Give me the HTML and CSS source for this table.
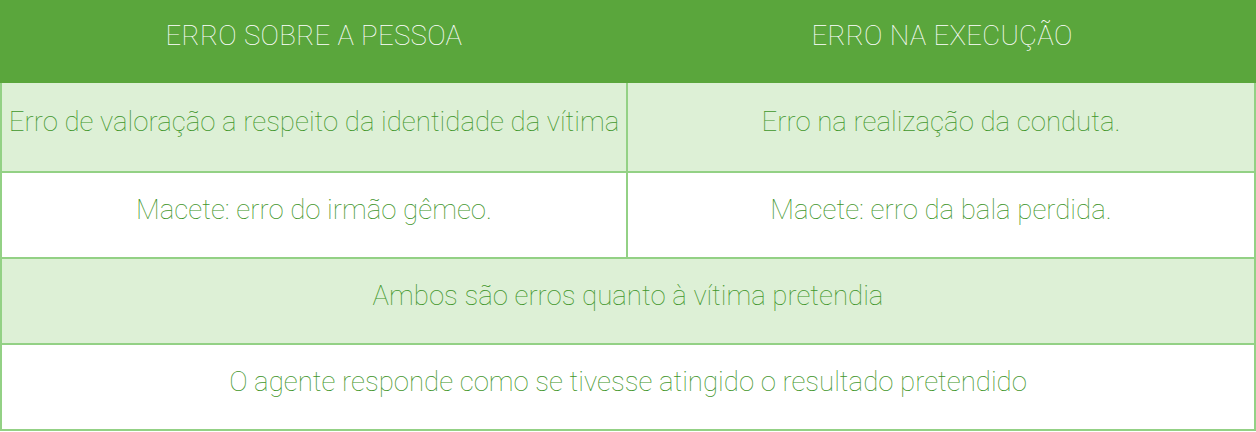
FILE: index.html
```html
<!DOCTYPE html>
<html lang="pt">
<head>
<meta charset="utf-8">
<title>Erro sobre a pessoa x Erro na execução</title>
<link rel="stylesheet" href="styles.css">
</head>
<body>
<div class="table">
  <div class="cell head">ERRO SOBRE A PESSOA</div>
  <div class="cell head">ERRO NA EXECUÇÃO</div>

  <div class="cell tint tall left">Erro de valoração a respeito da identidade da vítima</div>
  <div class="cell tint tall">Erro na realização da conduta.</div>

  <div class="cell left">Macete: erro do irmão gêmeo.</div>
  <div class="cell">Macete: erro da bala perdida.</div>

  <div class="cell tint span">Ambos são erros quanto à vítima pretendia</div>

  <div class="cell span">O agente responde como se tivesse atingido o resultado pretendido</div>
</div>
</body>
</html>
```

FILE: styles.css
```css
html, body {
  margin: 0;
  padding: 0;
  background: #ffffff;
}

.table {
  width: 1256px;
  display: grid;
  grid-template-columns: 628px 628px;
  font-family: "Roboto", "Liberation Sans", sans-serif;
  font-weight: 100;
  font-size: 27.6px;
  line-height: 1.2;
  color: #3f962a;
}

.cell {
  box-sizing: border-box;
  height: 86px;
  display: flex;
  align-items: center;
  justify-content: center;
  text-align: center;
  padding-bottom: 11px;
  border-bottom: 2px solid #93d185;
  border-right: 2px solid #93d185;
  white-space: nowrap;
}

.left {
  border-left: 2px solid #93d185;
}

.head {
  height: 83px;
  background: #5aa63c;
  color: #ffffff;
  border: 0;
  letter-spacing: 0.3px;
}

.tint {
  background: #ddf0d6;
}

.tall {
  height: 90px;
}

.span {
  grid-column: 1 / span 2;
  border-left: 2px solid #93d185;
}
```
